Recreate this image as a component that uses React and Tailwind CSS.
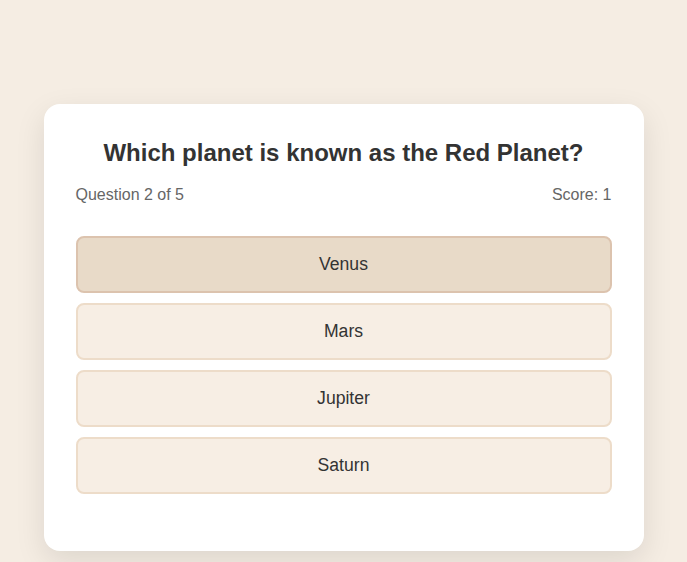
const QUESTION = "Which planet is known as the Red Planet?";
const OPTIONS = ["Venus", "Mars", "Jupiter", "Saturn"];

export default function App() {
  const selected = 0;

  return (
    <div className="min-h-[562px] bg-[#f5ede3] pt-[104px] font-['Liberation_Sans',Arial,sans-serif]">
      <div className="mx-auto w-[600px] rounded-2xl bg-white px-8 pt-[31px] pb-[57px] shadow-[0_10px_30px_rgba(0,0,0,0.1)]">
        <h2 className="mb-3 text-center text-2xl leading-9 font-bold text-[#333]">{QUESTION}</h2>
        <div className="flex justify-between text-base leading-6 text-[#666]">
          <span>Question 2 of 5</span>
          <span>Score: 1</span>
        </div>

        <div className="mt-[29px] flex flex-col gap-[10px]">
          {OPTIONS.map((opt, i) => (
            <button
              key={opt}
              className={
                i === selected
                  ? "h-[57px] w-full rounded-lg border-2 border-[#dcc3ae] bg-[#e8dac8] text-[17.6px] text-[#333]"
                  : "h-[57px] w-full rounded-lg border-2 border-[#eddcc9] bg-[#f7eee4] text-[17.6px] text-[#333]"
              }
            >
              {opt}
            </button>
          ))}
        </div>
      </div>
    </div>
  );
}
